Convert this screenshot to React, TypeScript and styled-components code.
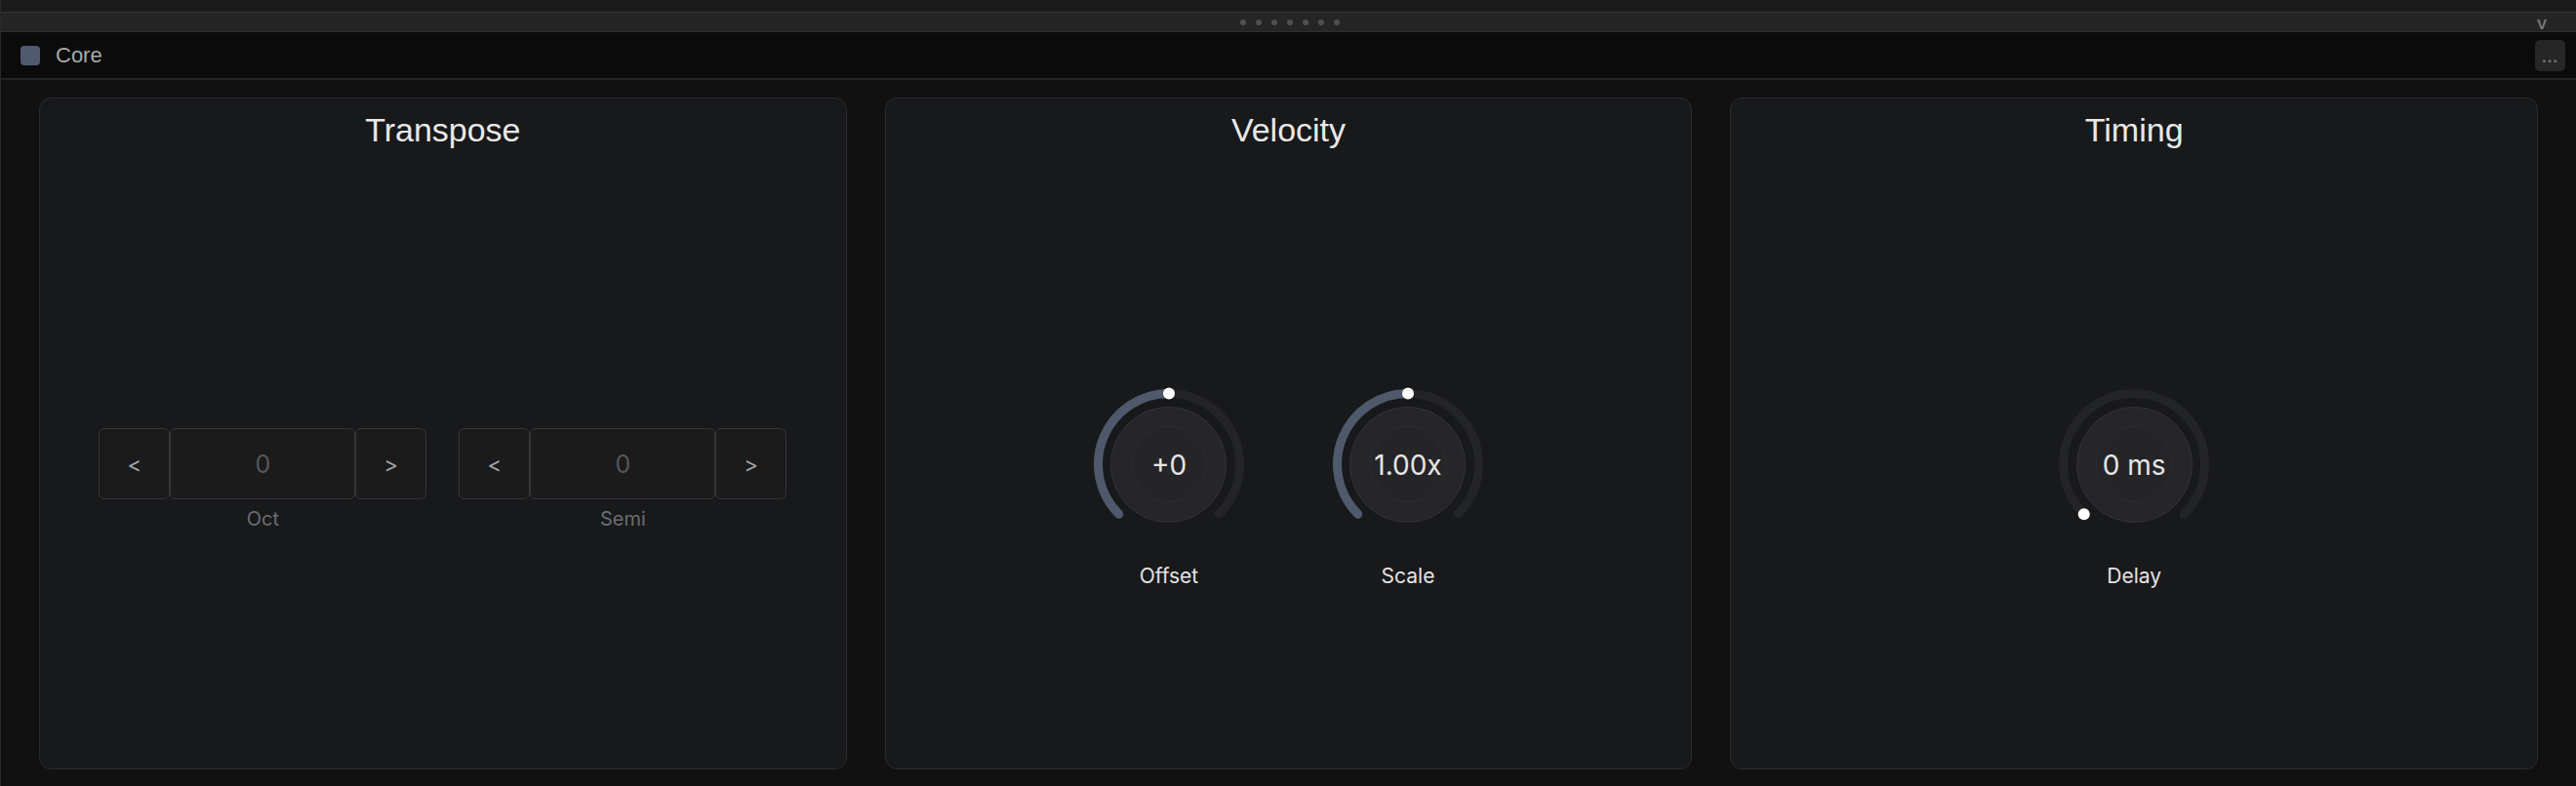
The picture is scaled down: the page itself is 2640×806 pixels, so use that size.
import React from 'react';
import styled, { createGlobalStyle } from 'styled-components';

const GlobalStyle = createGlobalStyle`
  html, body, #root {
    margin: 0;
    padding: 0;
    height: 100%;
  }
  body {
    background: #111112;
    font-family: "Liberation Sans", Arial, sans-serif;
    overflow: hidden;
  }
`;

type KnobProps = {
  label: string;
  display: string;
  value: number; // 0..1
  fill: boolean;
};

const START = -135;
const SWEEP = 270;
const R = 72.5;
const C = 80;

function point(angle: number) {
  const rad = (angle * Math.PI) / 180;
  return { x: C + R * Math.sin(rad), y: C - R * Math.cos(rad) };
}

function arcPath(from: number, to: number) {
  const a = point(from);
  const b = point(to);
  const large = to - from > 180 ? 1 : 0;
  return `M ${a.x} ${a.y} A ${R} ${R} 0 ${large} 1 ${b.x} ${b.y}`;
}

function Knob({ label, display, value, fill }: KnobProps) {
  const angle = START + SWEEP * value;
  const dot = point(angle);
  return (
    <KnobBlock>
      <KnobStack>
        <svg width="160" height="160" viewBox="0 0 160 160" style={{ gridArea: '1 / 1' }}>
          <path d={arcPath(START, START + SWEEP)} stroke="#232427" strokeWidth="9" fill="none" strokeLinecap="round" />
          {fill && value > 0 && (
            <path d={arcPath(START, angle)} stroke="#4e596b" strokeWidth="9" fill="none" strokeLinecap="round" />
          )}
          <circle cx={dot.x} cy={dot.y} r="6" fill="#ffffff" />
        </svg>
        <KnobFace>
          <KnobInner />
          <KnobValue>{display}</KnobValue>
        </KnobFace>
      </KnobStack>
      <KnobLabel>{label}</KnobLabel>
    </KnobBlock>
  );
}

function Stepper({ label }: { label: string }) {
  return (
    <StepperGroup>
      <StepperRow>
        <StepButton>&lt;</StepButton>
        <StepField>0</StepField>
        <StepButton>&gt;</StepButton>
      </StepperRow>
      <StepperLabel>{label}</StepperLabel>
    </StepperGroup>
  );
}

export default function App() {
  return (
    <>
      <GlobalStyle />
      <Root>
        <TopBand />
        <HandleBar>
          <span />
          <Dots>
            {Array.from({ length: 7 }).map((_, i) => (
              <Dot key={i} />
            ))}
          </Dots>
          <Collapse>V</Collapse>
        </HandleBar>
        <Header>
          <Swatch />
          <HeaderTitle>Core</HeaderTitle>
          <MoreButton>...</MoreButton>
        </Header>
        <Main>
          <Panel>
            <PanelTitle>Transpose</PanelTitle>
            <PanelBody $gap={33}>
              <Stepper label="Oct" />
              <Stepper label="Semi" />
            </PanelBody>
          </Panel>
          <Panel>
            <PanelTitle>Velocity</PanelTitle>
            <PanelBody $gap={85}>
              <Knob label="Offset" display="+0" value={0.5} fill />
              <Knob label="Scale" display="1.00x" value={0.5} fill />
            </PanelBody>
          </Panel>
          <Panel>
            <PanelTitle>Timing</PanelTitle>
            <PanelBody $gap={85}>
              <Knob label="Delay" display="0 ms" value={0} fill />
            </PanelBody>
          </Panel>
        </Main>
      </Root>
    </>
  );
}

const Root = styled.div`
  height: 100vh;
  display: flex;
  flex-direction: column;
  border-left: 1px solid #2a2a2b;
  box-sizing: border-box;
`;

const TopBand = styled.div`
  height: 12px;
  background: #1a1a1a;
`;

const HandleBar = styled.div`
  height: 19px;
  background: #252525;
  border-top: 1px solid #333333;
  border-bottom: 1px solid #303030;
  display: grid;
  grid-template-columns: 1fr auto 1fr;
  align-items: center;
`;

const Dots = styled.div`
  display: flex;
  gap: 10px;
  padding-left: 2px;
`;

const Dot = styled.span`
  width: 6px;
  height: 6px;
  border-radius: 50%;
  background: #505050;
`;

const Collapse = styled.span`
  justify-self: end;
  padding-right: 30px;
  font-family: "Liberation Sans", Arial, sans-serif;
  font-size: 15px;
  font-weight: bold;
  color: #7a7a7a;
  line-height: 1;
  transform: translateY(2px);
`;

const Header = styled.div`
  height: 47px;
  background: #0b0b0b;
  border-bottom: 2px solid #232323;
  display: flex;
  align-items: center;
  padding: 0 11px 0 20px;
`;

const Swatch = styled.span`
  width: 20px;
  height: 20px;
  border-radius: 4px;
  background: #4f5a6e;
`;

const HeaderTitle = styled.span`
  margin-left: 16px;
  font-size: 22px;
  color: #a9a9a9;
`;

const MoreButton = styled.span`
  margin-left: auto;
  width: 31px;
  height: 32px;
  border-radius: 5px;
  background: #262626;
  color: #777777;
  font-size: 17px;
  font-weight: bold;
  display: flex;
  align-items: center;
  justify-content: center;
  letter-spacing: 1px;
  padding-top: 4px;
  box-sizing: border-box;
`;

const Main = styled.div`
  flex: 1;
  display: grid;
  grid-template-columns: repeat(3, 1fr);
  gap: 39px;
  padding: 18px 39px 17px 39px;
  min-height: 0;
`;

const Panel = styled.section`
  background: #18191b;
  border: 1px solid #2a2b2f;
  border-radius: 12px;
  display: flex;
  flex-direction: column;
  min-height: 0;
`;

const PanelTitle = styled.h2`
  margin: 0;
  padding-top: 12px;
  font-family: "Liberation Sans", Arial, sans-serif;
  font-weight: normal;
  font-size: 34px;
  line-height: 40px;
  text-align: center;
  color: #e8e8e8;
`;

const PanelBody = styled.div<{ $gap: number }>`
  flex: 1;
  display: flex;
  align-items: center;
  justify-content: center;
  gap: ${(p) => p.$gap}px;
  padding-top: 58px;
`;

const StepperGroup = styled.div`
  display: flex;
  flex-direction: column;
  align-items: center;
  padding-bottom: 16px;
`;

const StepperRow = styled.div`
  display: flex;
`;

const StepButton = styled.button`
  width: 73px;
  height: 73px;
  box-sizing: border-box;
  background: #1b1b1c;
  border: 1.5px solid #34363a;
  border-radius: 6px;
  color: #a8a8a8;
  font-family: "Inter", "Noto Sans", sans-serif;
  font-size: 22px;
  padding: 0;
`;

const StepField = styled.div`
  width: 190px;
  height: 73px;
  box-sizing: border-box;
  background: #1b1b1b;
  border: 1.5px solid #34363a;
  border-radius: 6px;
  color: #55575c;
  font-family: "Inter", "Noto Sans", sans-serif;
  font-size: 25px;
  display: flex;
  align-items: center;
  justify-content: center;
`;

const StepperLabel = styled.div`
  margin-top: 8px;
  font-family: "Inter", "Noto Sans", sans-serif;
  font-size: 20px;
  line-height: 24px;
  color: #6c6e73;
`;

const KnobBlock = styled.div`
  display: flex;
  flex-direction: column;
  align-items: center;
  gap: 22px;
`;

const KnobStack = styled.div`
  display: grid;
  place-items: center;
  width: 160px;
  height: 160px;
`;

const KnobFace = styled.div`
  grid-area: 1 / 1;
  width: 119px;
  height: 119px;
  border-radius: 50%;
  box-sizing: border-box;
  background: #262629;
  border: 1.5px solid #323337;
  display: grid;
  place-items: center;
`;

const KnobInner = styled.div`
  grid-area: 1 / 1;
  width: 76px;
  height: 76px;
  border-radius: 50%;
  border: 1px solid #2c2d31;
  background: #252528;
`;

const KnobValue = styled.span`
  grid-area: 1 / 1;
  font-family: "Inter", "Noto Sans", sans-serif;
  font-size: 28px;
  color: #e6e6e6;
  margin-top: 2px;
`;

const KnobLabel = styled.div`
  font-family: "Inter", "Noto Sans", sans-serif;
  font-size: 21px;
  line-height: 25px;
  color: #e4e4e4;
`;
